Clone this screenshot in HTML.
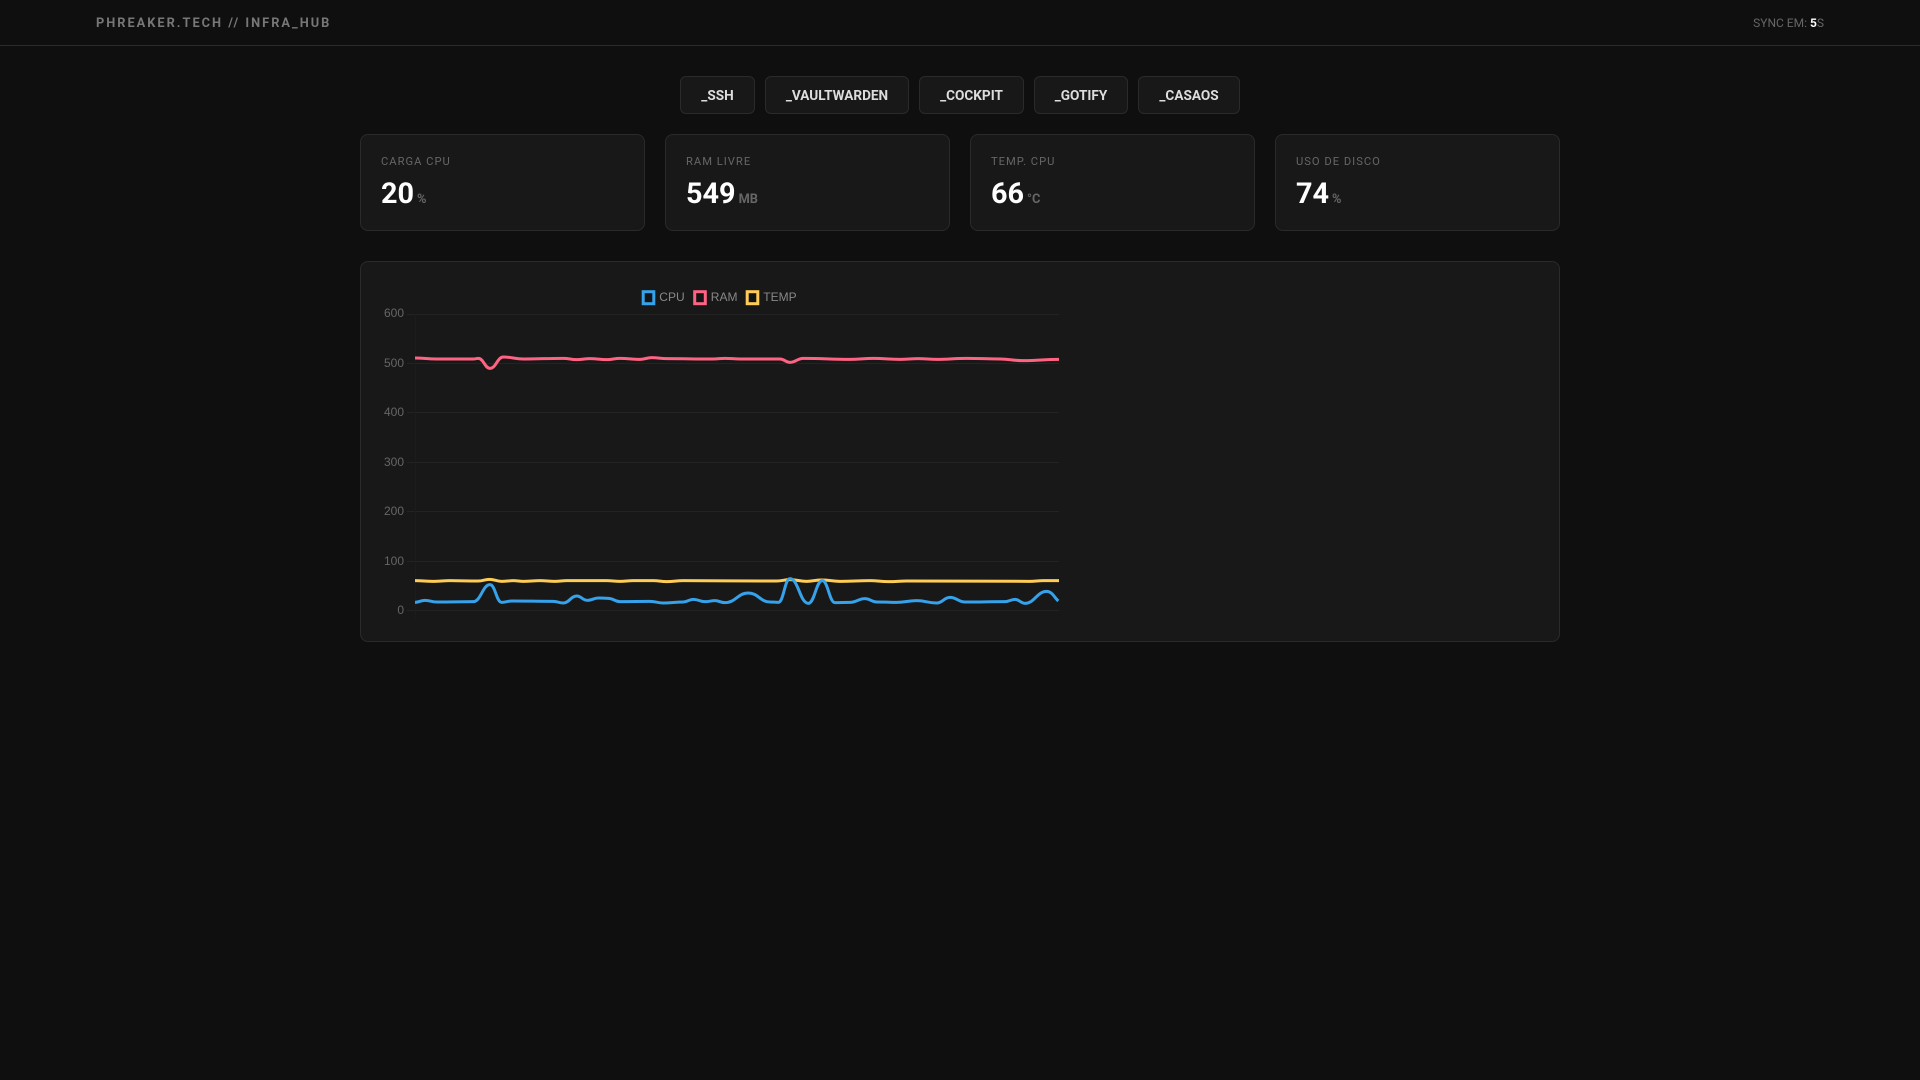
<!DOCTYPE html>
<html><head><meta charset="utf-8"><title>PHREAKER.TECH // INFRA_HUB</title>
<style>
*{box-sizing:border-box;margin:0;padding:0}
html,body{width:1920px;height:1080px;background:#0f0f0f;overflow:hidden}
body{position:relative;font-family:Roboto,"Liberation Sans",sans-serif;color:#fff}
.a{position:absolute;white-space:nowrap}
.hdr{left:0;top:0;width:1920px;height:46px;border-bottom:1px solid #2a2a2a}
.title{left:96px;top:16px;line-height:16px;font-size:12.8px;font-weight:700;letter-spacing:2px;color:#777}
.sync{right:96px;top:15px;line-height:16px;font-size:12px;color:#666}
.sync b{color:#fff}
.btn{top:76px;height:38px;background:#181818;border:1px solid #2a2a2a;border-radius:6px;text-align:center;line-height:38px;font-size:13.6px;font-weight:700;color:#ddd}
.card{top:134px;width:285px;height:97px;background:#181818;border:1px solid #2a2a2a;border-radius:8px}
.lb{left:20px;top:21px;line-height:12px;font-size:11.2px;letter-spacing:1px;color:#666}
.val{left:20px;top:42px;line-height:34px;font-size:28.8px;font-weight:700;color:#fff}
.val small{font-size:12.8px;font-weight:700;color:#666;margin-left:3px}
.chart{left:360px;top:261px;width:1200px;height:381px;background:#181818;border:1px solid #2a2a2a;border-radius:8px}
svg{position:absolute;left:0;top:0}
svg text{font-family:"Liberation Sans",Arial,sans-serif;font-size:12px;fill:#666}
svg text.l{fill:#888}
</style></head><body>
<div class="a hdr"></div>
<div class="a title">PHREAKER.TECH // INFRA_HUB</div>
<div class="a sync">SYNC EM: <b>5</b>S</div>
<div class="a btn" style="left:680px;width:75px">_SSH</div>
<div class="a btn" style="left:765px;width:144px">_VAULTWARDEN</div>
<div class="a btn" style="left:919px;width:105px">_COCKPIT</div>
<div class="a btn" style="left:1034px;width:94px">_GOTIFY</div>
<div class="a btn" style="left:1138px;width:102px">_CASAOS</div>
<div class="a card" style="left:360px"><div class="a lb">CARGA CPU</div><div class="a val">20<small>%</small></div></div>
<div class="a card" style="left:665px"><div class="a lb">RAM LIVRE</div><div class="a val">549<small>MB</small></div></div>
<div class="a card" style="left:970px"><div class="a lb">TEMP. CPU</div><div class="a val">66<small>°C</small></div></div>
<div class="a card" style="left:1275px"><div class="a lb">USO DE DISCO</div><div class="a val">74<small>%</small></div></div>
<div class="a chart"></div>
<svg width="1920" height="1080" viewBox="0 0 1920 1080">
<g stroke="#232323" stroke-width="1" fill="none">
<path d="M407 314.5H1059M407 363.5H1059M407 412.5H1059M407 462.5H1059M407 511.5H1059M407 561.5H1059M407 610.5H1059"/>
<path d="M415.5 314V618" stroke="#1c1c1c"/>
</g>
<g text-anchor="end">
<text x="404" y="317">600</text><text x="404" y="367">500</text><text x="404" y="416">400</text><text x="404" y="466">300</text><text x="404" y="515">200</text><text x="404" y="565">100</text><text x="404" y="614">0</text>
</g>
<g fill="#141414" stroke-width="3">
<rect x="643.2" y="291.7" width="10.6" height="12" stroke="#36a2eb"/>
<rect x="694.7" y="291.7" width="10.6" height="12" stroke="#ff6384"/>
<rect x="747.2" y="291.7" width="10.6" height="12" stroke="#ffcd56"/>
</g>
<text class="l" x="659.3" y="301">CPU</text><text class="l" x="710.8" y="301">RAM</text><text class="l" x="763.3" y="301">TEMP</text>
<g fill="none" stroke-width="9" transform="translate(350 540) scale(.33333)">
<path stroke="#ffcd56" d="M195 122C220 122 225 124 250 124C272 124 278 122 300 122C338 122 347 123 385 123C400 123 403 118 418 118C435 118 438 124 455 124C471 124 474 122 490 122C503 122 507 124 520 124C542 124 548 122 570 122C590 122 595 124 615 124C631 124 634 122 650 122L770 122C788 122 792 124 810 124C828 124 832 122 850 122L910 122C928 122 932 125 950 125C972 125 978 122 1000 122C1126 122 1154 123 1280 123C1298 123 1302 119 1320 119C1342 119 1348 124 1370 124C1390 124 1395 120 1415 120C1440 120 1445 124 1470 124C1510 124 1520 122 1560 122C1585 122 1590 125 1615 125C1640 125 1645 123 1670 123C1836 123 1874 124 2040 124C2058 124 2062 122 2080 122L2127 122"/>
<path stroke="#36a2eb" d="M195 187C208 187 212 181 225 181C241 181 244 186 260 186C310 186 320 185 370 185C392 185 398 134 420 134C436 134 439 187 455 187C468 187 472 183 485 183C540 183 555 184 610 184C623 184 627 189 640 189C658 189 662 168 680 168C694 168 698 181 712 181C727 181 730 174 745 174C758 174 762 175 775 175C791 175 794 185 810 185C850 185 860 184 900 184C918 184 922 189 940 189C967 189 973 186 1000 186C1013 186 1017 178 1030 178C1046 178 1049 185 1065 185C1078 185 1082 182 1095 182C1108 182 1112 188 1125 188C1157 188 1163 159 1195 159C1224 159 1231 186 1260 186C1271 186 1274 187 1285 187C1301 187 1304 116 1320 116C1345 116 1350 190 1375 190C1394 190 1398 122 1417 122C1434 122 1438 188 1455 188C1475 188 1480 187 1500 187C1520 187 1525 176 1545 176C1561 176 1564 186 1580 186C1607 186 1613 187 1640 187C1667 187 1673 182 1700 182C1727 182 1733 189 1760 189C1778 189 1782 172 1800 172C1820 172 1825 186 1845 186C1899 186 1911 185 1965 185C1978 185 1982 178 1995 178C2008 178 2012 190 2025 190C2054 190 2061 154 2090 154C2106 154 2113 172 2125 183"/>
</g>
<g fill="none" stroke-width="9" transform="translate(350 250) scale(.33333)">
<path stroke="#ff6384" d="M195 324C224 324 231 327 260 327L370 327C377 327 378 325 385 325C401 325 404 355 420 355C438 355 442 321 460 321C487 321 493 327 520 327C574 327 586 325 640 325C658 325 662 329 680 329C698 329 702 326 720 326C742 326 748 329 770 329C788 329 792 325 810 325C837 325 843 328 870 328C886 328 889 323 905 323C925 323 930 326 950 326C1013 326 1027 327 1090 327C1106 327 1109 325 1125 325C1145 325 1150 327 1170 327L1290 327C1303 327 1307 337 1320 337C1338 337 1342 325 1360 325C1423 325 1437 328 1500 328C1531 328 1539 325 1570 325C1606 325 1614 328 1650 328C1675 328 1680 326 1705 326C1730 326 1735 328 1760 328C1800 328 1810 325 1850 325C1895 325 1905 327 1950 327C1981 327 1989 332 2020 332C2068 332 2079 328 2127 328"/>
</g>
</svg>
</body></html>
